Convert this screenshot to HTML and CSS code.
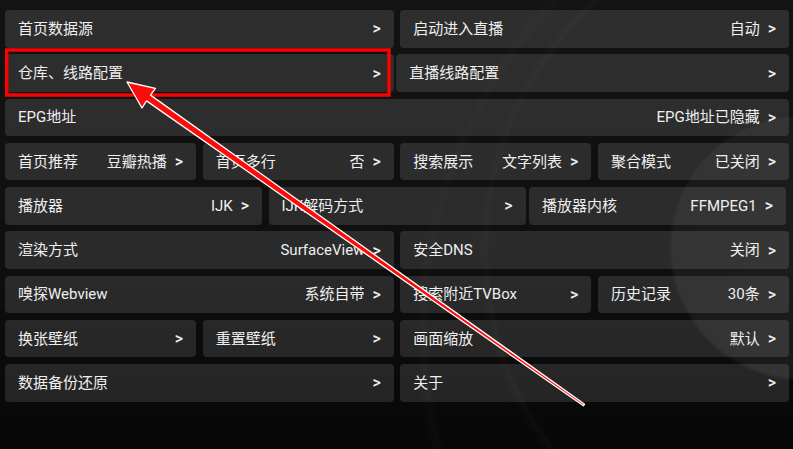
FILE: index.html
```html
<!DOCTYPE html>
<html lang="zh-CN">
<head>
<meta charset="utf-8">
<title>设置</title>
<link rel="stylesheet" href="styles.css">
</head>
<body>
<div class="screen">
  <div class="grid">
    <div class="tile s6"><span class="label">首页数据源</span><span class="value"><span class="chev">&gt;</span></span></div>
    <div class="tile s6"><span class="label">启动进入直播</span><span class="value">自动<span class="chev">&gt;</span></span></div>

    <div class="tile s6"><span class="label">仓库、线路配置</span><span class="value"><span class="chev">&gt;</span></span></div>
    <div class="tile s6 wide-left"><span class="label">直播线路配置</span><span class="value"><span class="chev">&gt;</span></span></div>

    <div class="tile s12"><span class="label">EPG地址</span><span class="value">EPG地址已隐藏<span class="chev">&gt;</span></span></div>

    <div class="tile s3"><span class="label">首页推荐</span><span class="value">豆瓣热播<span class="chev">&gt;</span></span></div>
    <div class="tile s3"><span class="label">首页多行</span><span class="value">否<span class="chev">&gt;</span></span></div>
    <div class="tile s3"><span class="label">搜索展示</span><span class="value">文字列表<span class="chev">&gt;</span></span></div>
    <div class="tile s3"><span class="label">聚合模式</span><span class="value">已关闭<span class="chev">&gt;</span></span></div>

    <div class="tile s4"><span class="label">播放器</span><span class="value">IJK<span class="chev">&gt;</span></span></div>
    <div class="tile s4"><span class="label">IJK解码方式</span><span class="value"><span class="chev">&gt;</span></span></div>
    <div class="tile s4 nudge"><span class="label">播放器内核</span><span class="value">FFMPEG1<span class="chev">&gt;</span></span></div>

    <div class="tile s6"><span class="label">渲染方式</span><span class="value">SurfaceView<span class="chev">&gt;</span></span></div>
    <div class="tile s6"><span class="label">安全DNS</span><span class="value">关闭<span class="chev">&gt;</span></span></div>

    <div class="tile s6"><span class="label">嗅探Webview</span><span class="value">系统自带<span class="chev">&gt;</span></span></div>
    <div class="tile s3"><span class="label">搜索附近TVBox</span><span class="value"><span class="chev">&gt;</span></span></div>
    <div class="tile s3"><span class="label">历史记录</span><span class="value">30条<span class="chev">&gt;</span></span></div>

    <div class="tile s3"><span class="label">换张壁纸</span><span class="value"><span class="chev">&gt;</span></span></div>
    <div class="tile s3"><span class="label">重置壁纸</span><span class="value"><span class="chev">&gt;</span></span></div>
    <div class="tile s6"><span class="label">画面缩放</span><span class="value">默认<span class="chev">&gt;</span></span></div>

    <div class="tile s6"><span class="label">数据备份还原</span><span class="value"><span class="chev">&gt;</span></span></div>
    <div class="tile s6"><span class="label">关于</span><span class="value"><span class="chev">&gt;</span></span></div>
  </div>

  <svg class="annot" width="793" height="449" viewBox="0 0 793 449" xmlns="http://www.w3.org/2000/svg">
    <rect x="6.7" y="50" width="382.3" height="45" fill="none" stroke="#ff0000" stroke-width="3.4"/>
    <polygon points="127,82 155.4,88.3 150.5,95.1 584.6,404.2 583.4,405.8 146.5,100.9 142,108"
             fill="#ff0a0a" stroke="#ffffff" stroke-width="1.3" stroke-linejoin="round"/>
  </svg>
</div>
</body>
</html>
```

FILE: styles.css
```css
* {
  box-sizing: border-box;
}

html, body {
  margin: 0;
  padding: 0;
  width: 793px;
  height: 449px;
  overflow: hidden;
  background: #0c0c0c;
}

.screen {
  position: relative;
  width: 793px;
  height: 449px;
  overflow: hidden;
  font-family: "Roboto", "Noto Sans CJK SC", sans-serif;
  color: #ececec;
  background:
    radial-gradient(circle at 802px 248px, #1c1c1c 0, #1a1a1a 128px, rgba(50,50,50,0.3) 130px, rgba(0,0,0,0) 133px),
    radial-gradient(circle at 820px 250px, rgba(0,0,0,0) 330px, rgba(60,60,60,0.1) 334px, rgba(0,0,0,0) 342px),
    radial-gradient(circle at 900px 330px, rgba(0,0,0,0) 470px, rgba(60,60,60,0.08) 476px, rgba(0,0,0,0) 486px),
    linear-gradient(180deg, #131313 0%, #0f0f0f 55%, #070707 100%);
  padding: 10px 4px 0 5px;
}

.grid {
  display: grid;
  grid-template-columns: repeat(12, 1fr);
  grid-auto-rows: 37.5px;
  column-gap: 6.5px;
  row-gap: 6.75px;
}

.tile {
  display: flex;
  align-items: center;
  justify-content: space-between;
  padding: 1px 13px 0 13px;
  background: rgba(255, 255, 255, 0.118);
  border-radius: 4px;
  font-size: 15px;
  line-height: 1;
  white-space: nowrap;
  overflow: hidden;
}

.s3 { grid-column: span 3; }
.s4 { grid-column: span 4; }
.s6 { grid-column: span 6; }
.s12 { grid-column: span 12; }

.wide-left {
  margin-left: -4px;
}

.nudge {
  margin-left: -3px;
  margin-right: 3px;
}

.label {
  color: #efefef;
}

.value {
  display: flex;
  align-items: center;
  color: #efefef;
}

.chev {
  margin-left: 8px;
  font-size: 16px;
  font-weight: 500;
}

.annot {
  position: absolute;
  left: 0;
  top: 0;
  pointer-events: none;
}
```
